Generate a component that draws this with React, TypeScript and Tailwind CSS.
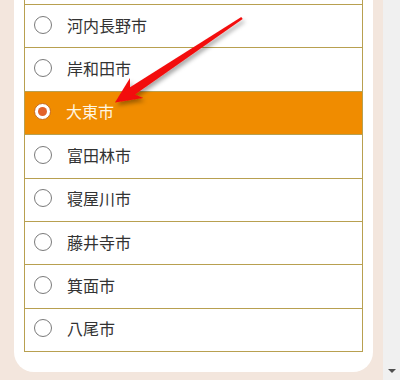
const cities = ['河内長野市', '岸和田市', '大東市', '富田林市', '寝屋川市', '藤井寺市', '箕面市', '八尾市'];
const selected = '大東市';

function Radio({ checked }: { checked: boolean }) {
  if (checked) {
    return (
      <span className="flex h-[17px] w-[17px] shrink-0 items-center justify-center rounded-full border border-[#c86a1c] bg-white">
        <span className="h-[9px] w-[9px] rounded-full bg-[#e2622a]" />
      </span>
    );
  }
  return <span className="h-[18px] w-[18px] shrink-0 rounded-full border border-[#7a7a7a] bg-white" />;
}

function Arrow() {
  // red annotation arrow pointing at the selected row
  return (
    <svg className="pointer-events-none absolute left-0 top-0" width="400" height="380" viewBox="0 0 400 380">
      <defs>
        <filter id="sh" x="-20%" y="-20%" width="140%" height="140%">
          <feDropShadow dx="2" dy="3" stdDeviation="2" floodColor="#000" floodOpacity="0.35" />
        </filter>
        <linearGradient id="rg" x1="0" y1="0" x2="1" y2="1">
          <stop offset="0" stopColor="#ff1a1a" />
          <stop offset="1" stopColor="#e60000" />
        </linearGradient>
      </defs>
      <polygon
        filter="url(#sh)"
        fill="url(#rg)"
        points="115,102.5 143.3,98.1 135,94.6 242.7,19 241.3,17 130,87.2 130,78.1"
      />
    </svg>
  );
}

export default function App() {
  return (
    <div
      className="relative flex h-[380px] w-[400px] overflow-hidden bg-[#f3e6dd]"
      style={{ fontFamily: '"Noto Sans CJK JP", "Noto Sans", sans-serif' }}
    >
      <div className="w-[383px] shrink-0 pl-[14px] pr-[10px]">
        <div className="rounded-b-[20px] bg-white px-[10px] pb-[20px]">
          <ul className="border-x border-b border-[#b8a050]">
            <li className="h-[4px]" />
            {cities.map((c) => {
              const on = c === selected;
              return (
                <li
                  key={c}
                  className={`flex h-[43.375px] items-center gap-[15px] border-t border-[#b8a050] pb-[3px] pl-[9px] text-[16px] ${
                    on ? 'bg-[#f08c00] text-[#fff6e0]' : 'bg-white text-[#333333]'
                  }`}
                >
                  <Radio checked={on} />
                  <span className="leading-none">{c}</span>
                </li>
              );
            })}
          </ul>
        </div>
      </div>
      <div className="flex w-[17px] shrink-0 flex-col items-center justify-end bg-[#f0f0f0] pb-[7px]">
        <span className="h-0 w-0 border-x-[4px] border-t-[4px] border-x-transparent border-t-[#505050]" />
      </div>
      <Arrow />
    </div>
  );
}
